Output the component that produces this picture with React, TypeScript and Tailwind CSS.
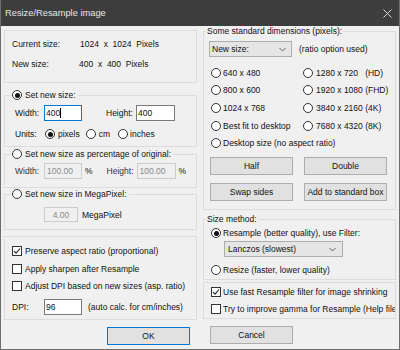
import React from "react";

const Radio = ({ checked = false }: { checked?: boolean }) => (
  <span className="w-[10px] h-[10px] rounded-full border border-[#333333] bg-white flex items-center justify-center shrink-0">
    {checked && <span className="w-[5px] h-[5px] rounded-full bg-[#111111]" />}
  </span>
);

const Check = ({ checked = false }: { checked?: boolean }) => (
  <span className="w-[10px] h-[10px] border border-[#333333] bg-white flex items-center justify-center shrink-0">
    {checked && (
      <svg width="8" height="8" viewBox="0 0 8 8">
        <path d="M1 4.2 L3 6.2 L7 1.5" fill="none" stroke="#222" strokeWidth="1.1" />
      </svg>
    )}
  </span>
);

const Btn = ({ label, def = false, cls = "" }: { label: string; def?: boolean; cls?: string }) => (
  <div
    className={`w-[83px] h-[18px] bg-[#e1e1e1] border flex items-center justify-center ${
      def ? "border-[#0078d7]" : "border-[#adadad]"
    } ${cls}`}
  >
    {label}
  </div>
);

const Chevron = () => (
  <svg width="7" height="5" viewBox="0 0 7 5">
    <path d="M0.5 1 L3.5 4 L6.5 1" fill="none" stroke="#555" strokeWidth="0.9" />
  </svg>
);

export default function App() {
  return (
    <div
      className="w-[400px] h-[350px] bg-[#f0f0f0] border-x border-b border-[#6e6e6e] text-[8.5px] leading-[12px] text-[#111111] overflow-hidden"
      style={{ fontFamily: "'Liberation Sans', Arial, sans-serif" }}
    >
      {/* Title bar */}
      <div className="h-[26px] bg-[#3d3d3d] flex items-center justify-between pl-[5px] pr-[8px] -mx-px">
        <span className="text-[9.3px] text-[#e8e8e8]">Resize/Resample image</span>
        <svg width="9" height="9" viewBox="0 0 9 9">
          <path d="M0.5 0.5 L8.5 8.5 M8.5 0.5 L0.5 8.5" stroke="#d8d8d8" strokeWidth="1" />
        </svg>
      </div>

      <div className="flex">
        {/* Left column */}
        <div className="w-[193px] ml-[3px] flex flex-col">
          {/* Group A */}
          <div className="mt-[4px] h-[53px] border border-[#dcdcdc] pt-[7px] pl-[7px] flex flex-col gap-[8px]">
            <div className="flex whitespace-pre">
              <span className="w-[68px]">Current size:</span>
              <span>1024  x  1024  Pixels</span>
            </div>
            <div className="flex whitespace-pre">
              <span className="w-[67px]">New size:</span>
              <span>400  x  400  Pixels</span>
            </div>
          </div>

          {/* Group B */}
          <div className="mt-[12px] h-[52px] border border-[#dcdcdc] flex flex-col">
            <div className="-mt-[7px] ml-[7px] w-fit pr-[2px] bg-[#f0f0f0] flex items-center gap-[3px]">
              <Radio checked />
              <span>Set new size:</span>
            </div>
            <div className="mt-[4px] flex items-center">
              <span className="ml-[10px] w-[29px]">Width:</span>
              <div className="w-[38px] h-[16px] border border-[#0078d7] bg-white flex items-center pl-[1px]">
                400<span className="w-px h-[10px] bg-black" />
              </div>
              <span className="ml-[24px] w-[30px]">Height:</span>
              <div className="w-[39px] h-[16px] border border-[#7a7a7a] bg-white flex items-center pl-[1px]">400</div>
            </div>
            <div className="mt-[7px] flex items-center">
              <span className="ml-[10px] w-[30px]">Units:</span>
              <Radio checked />
              <span className="ml-[3px]">pixels</span>
              <span className="ml-[6px]"><Radio /></span>
              <span className="ml-[3px]">cm</span>
              <span className="ml-[8px]"><Radio /></span>
              <span className="ml-[2px]">inches</span>
            </div>
          </div>

          {/* Group C */}
          <div className="mt-[7px] h-[34px] border border-[#dcdcdc] flex flex-col">
            <div className="-mt-[7px] ml-[7px] w-fit pr-[2px] bg-[#f0f0f0] flex items-center gap-[3px]">
              <Radio />
              <span>Set new size as percentage of original:</span>
            </div>
            <div className="mt-[3px] flex items-center">
              <span className="ml-[10px] w-[29px] text-[#333]">Width:</span>
              <div className="w-[38px] h-[16px] border border-[#cccccc] flex items-center pl-[2px] text-[#8a8a8a]">100.00</div>
              <span className="ml-[3px]">%</span>
              <span className="ml-[14px] w-[30px] text-[#333]">Height:</span>
              <div className="w-[39px] h-[16px] border border-[#cccccc] flex items-center pl-[2px] text-[#8a8a8a]">100.00</div>
              <span className="ml-[3px]">%</span>
            </div>
          </div>

          {/* Group D */}
          <div className="mt-[6px] h-[36px] border border-[#dcdcdc] flex flex-col">
            <div className="-mt-[7px] ml-[7px] w-fit pr-[2px] bg-[#f0f0f0] flex items-center gap-[3px]">
              <Radio />
              <span>Set new size in MegaPixel:</span>
            </div>
            <div className="mt-[7px] flex items-center">
              <div className="ml-[39px] w-[34px] h-[15px] border border-[#cccccc] flex items-center justify-center text-[#8a8a8a]">4.00</div>
              <span className="ml-[4px]">MegaPixel</span>
            </div>
          </div>

          {/* Group E */}
          <div className="mt-[6px] h-[84px] border border-[#dcdcdc] flex flex-col pt-[8px]">
            <div className="ml-[7px] flex items-center gap-[3px]">
              <Check checked />
              <span>Preserve aspect ratio (proportional)</span>
            </div>
            <div className="mt-[6px] ml-[7px] flex items-center gap-[3px]">
              <Check />
              <span>Apply sharpen after Resample</span>
            </div>
            <div className="mt-[5px] ml-[7px] flex items-center gap-[3px]">
              <Check />
              <span>Adjust DPI based on new sizes (asp. ratio)</span>
            </div>
            <div className="mt-[7px] flex items-center">
              <span className="ml-[7px] w-[32px]">DPI:</span>
              <div className="w-[38px] h-[16px] border border-[#7a7a7a] bg-white flex items-center pl-[1px]">96</div>
              <span className="ml-[6px]">(auto calc. for cm/inches)</span>
            </div>
          </div>

          <Btn label="OK" def cls="mt-[7px] ml-[103px]" />
        </div>

        {/* Right column */}
        <div className="w-[193px] ml-[6px] flex flex-col">
          {/* Group F */}
          <div className="mt-[5px] h-[179px] border border-[#dcdcdc] flex flex-col">
            <div className="-mt-[6px] ml-[2px] w-fit px-[1px] bg-[#f0f0f0] leading-[10px]">
              Some standard dimensions (pixels):
            </div>
            <div className="mt-[5px] flex items-center">
              <div className="ml-[5px] w-[83px] h-[16px] bg-[#e5e5e5] border border-[#adadad] flex items-center justify-between pl-[2px] pr-[5px]">
                <span>New size:</span>
                <Chevron />
              </div>
              <span className="ml-[7px]">(ratio option used)</span>
            </div>
            <div className="mt-[7px] grid grid-cols-[92px_1fr] auto-rows-[17.6px] items-center ml-[7px]">
              <div className="flex items-center gap-[2px]"><Radio /><span>640 x 480</span></div>
              <div className="flex items-center gap-[3px] whitespace-pre"><Radio /><span>1280 x 720   (HD)</span></div>
              <div className="flex items-center gap-[2px]"><Radio /><span>800 x 600</span></div>
              <div className="flex items-center gap-[3px]"><Radio /><span>1920 x 1080 (FHD)</span></div>
              <div className="flex items-center gap-[2px]"><Radio /><span>1024 x 768</span></div>
              <div className="flex items-center gap-[3px]"><Radio /><span>3840 x 2160 (4K)</span></div>
              <div className="flex items-center gap-[2px]"><Radio /><span>Best fit to desktop</span></div>
              <div className="flex items-center gap-[3px]"><Radio /><span>7680 x 4320 (8K)</span></div>
              <div className="col-span-2 flex items-center gap-[2px]"><Radio /><span>Desktop size (no aspect ratio)</span></div>
            </div>
            <div className="mt-[5px] ml-[6px] flex gap-[11px]">
              <Btn label="Half" />
              <Btn label="Double" />
            </div>
            <div className="mt-[8px] ml-[6px] flex gap-[11px]">
              <Btn label="Swap sides" />
              <Btn label="Add to standard box" />
            </div>
          </div>

          {/* Group G */}
          <div className="mt-[9px] h-[61px] border border-[#dcdcdc] flex flex-col">
            <div className="-mt-[6px] ml-[2px] w-fit px-[1px] bg-[#f0f0f0] leading-[10px]">Size method:</div>
            <div className="mt-[3px] ml-[7px] flex items-center gap-[2px]">
              <Radio checked />
              <span>Resample (better quality), use Filter:</span>
            </div>
            <div className="mt-[2px] ml-[20px] w-[119px] h-[16px] bg-[#e5e5e5] border border-[#adadad] flex items-center justify-between pl-[3px] pr-[6px]">
              <span>Lanczos (slowest)</span>
              <Chevron />
            </div>
            <div className="mt-[7px] ml-[7px] flex items-center gap-[2px]">
              <Radio />
              <span>Resize (faster, lower quality)</span>
            </div>
          </div>

          {/* Group H */}
          <div className="mt-[2px] h-[37px] border border-[#dcdcdc] flex flex-col pt-[3px] overflow-hidden">
            <div className="ml-[7px] flex items-center gap-[2px] whitespace-nowrap">
              <Check checked />
              <span>Use fast Resample filter for image shrinking</span>
            </div>
            <div className="mt-[5px] ml-[7px] flex items-center gap-[2px] whitespace-nowrap">
              <Check />
              <span>Try to improve gamma for Resample (Help file)</span>
            </div>
          </div>

          <Btn label="Cancel" cls="mt-[7px] ml-[7px]" />
        </div>
      </div>
    </div>
  );
}
